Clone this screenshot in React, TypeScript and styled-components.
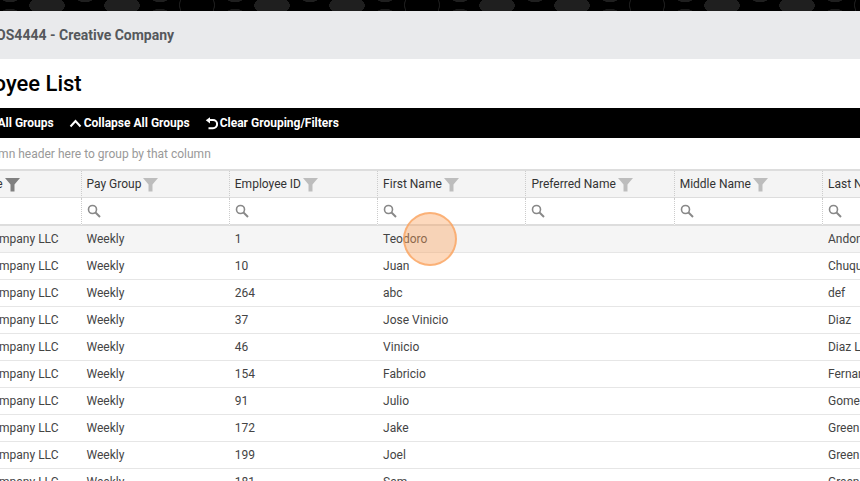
import { Fragment } from 'react';
import styled, { createGlobalStyle } from 'styled-components';

const GlobalStyle = createGlobalStyle`
  html, body {
    margin: 0;
    padding: 0;
    background: #fff;
    overflow: hidden;
  }
`;

const Viewport = styled.div`
  position: relative;
  width: 860px;
  height: 481px;
  overflow: hidden;
  font-family: Roboto, "Liberation Sans", sans-serif;
`;

const Pattern = styled.div`
  height: 11px;
  background-color: #000;
  background-image:
    radial-gradient(circle at 197px 5px, transparent 16.5px, #1c1c1c 17px, #1c1c1c 17.6px, transparent 18px),
    radial-gradient(ellipse 18px 9px at 47px 5.5px, #1f1f1f 98%, transparent 100%),
    radial-gradient(ellipse 18px 9px at 122px 5.5px, #1f1f1f 98%, transparent 100%),
    radial-gradient(circle at 85px -12px, #1f1f1f 14px, transparent 14.5px),
    radial-gradient(circle at 160px -12px, #1f1f1f 14px, transparent 14.5px),
    radial-gradient(circle at 10px -12px, #1f1f1f 14px, transparent 14.5px),
    radial-gradient(circle at 10px 23px, #1a1a1a 14px, transparent 14.5px),
    radial-gradient(circle at 160px 23px, #1a1a1a 14px, transparent 14.5px);
  background-size: 225px 11px;
`;

const CompanyBar = styled.div`
  display: flex;
  align-items: center;
  height: 48px;
  background: #e9eaec;
  white-space: nowrap;
  overflow: hidden;
`;

const CompanyName = styled.span`
  margin-left: -13px;
  font-size: 14px;
  font-weight: 700;
  color: #55585c;
`;

const TitleBar = styled.div`
  display: flex;
  align-items: center;
  height: 49px;
  white-space: nowrap;
  overflow: hidden;
`;

const Title = styled.h1`
  margin: 0 0 0 -56px;
  font-size: 22px;
  font-weight: 500;
  color: #000;
`;

const Toolbar = styled.div`
  display: flex;
  align-items: center;
  gap: 15px;
  height: 30px;
  background: #000;
  white-space: nowrap;
  overflow: hidden;
`;

const ToolbarButton = styled.span<{ $offset?: number }>`
  display: inline-flex;
  align-items: center;
  gap: 2px;
  margin-left: ${(p) => p.$offset ?? 0}px;
  font-size: 12px;
  font-weight: 700;
  color: #fff;
`;

const GroupHint = styled.div`
  display: flex;
  align-items: center;
  height: 31px;
  font-size: 12px;
  color: #999;
  white-space: nowrap;
  overflow: hidden;
`;

const HintText = styled.span`
  margin-left: -62px;
`;

const Grid = styled.div`
  display: grid;
  grid-template-columns: 81.5px repeat(5, 148.3px) 148px;
  border-top: 2px solid #ddd;
  width: max-content;
`;

const HeaderCell = styled.div<{ $first?: boolean }>`
  display: flex;
  align-items: center;
  justify-content: ${(p) => (p.$first ? 'flex-end' : 'flex-start')};
  gap: 2px;
  box-sizing: border-box;
  height: 27px;
  padding: ${(p) => (p.$first ? '0 61px 0 0' : '0 5px')};
  background: #f4f4f4;
  border-bottom: 1px solid #ddd;
  border-right: 1px dotted #ccc;
  font-size: 12px;
  color: #333;
  white-space: nowrap;
  overflow: hidden;
`;

const FilterCell = styled.div`
  display: flex;
  align-items: center;
  box-sizing: border-box;
  height: 28px;
  padding: 0 5px;
  background: #fff;
  border-bottom: 2px solid #ddd;
  border-right: 1px dotted #ccc;
`;

const BodyCell = styled.div<{ $even: boolean; $first?: boolean }>`
  display: flex;
  align-items: center;
  justify-content: ${(p) => (p.$first ? 'flex-end' : 'flex-start')};
  box-sizing: border-box;
  height: 27px;
  padding: ${(p) => (p.$first ? '0 23px 0 0' : '0 5px')};
  background: ${(p) => (p.$even ? '#f5f5f5' : '#fff')};
  border-bottom: 1px solid #e6e6e6;
  font-size: 12px;
  color: #444;
  white-space: nowrap;
  overflow: hidden;
`;

const Spotlight = styled.div`
  position: absolute;
  left: 403px;
  top: 212px;
  box-sizing: border-box;
  width: 54px;
  height: 54px;
  border-radius: 50%;
  background: rgba(250, 160, 90, 0.4);
  border: 2px solid rgba(250, 160, 90, 0.7);
`;

const FunnelIcon = ({ color }: { color: string }) => (
  <svg width="15" height="15" viewBox="0 0 15 15" style={{ flexShrink: 0 }}>
    <path d="M0 1h15L9.5 7.5V14.5H5.5V7.5z" fill={color} />
  </svg>
);

const SearchIcon = () => (
  <svg width="14" height="14" viewBox="0 0 14 14" fill="none" stroke="#888" strokeWidth="1.6">
    <circle cx="5.5" cy="5.5" r="4" />
    <path d="M8.5 8.5L13 13" strokeWidth="2" />
  </svg>
);

const ChevronIcon = () => (
  <svg width="13" height="9" viewBox="0 0 13 9" fill="none" stroke="#fff" strokeWidth="2">
    <path d="M1.5 7.5L6.5 2l5 5.5" />
  </svg>
);

const ResetIcon = () => (
  <svg width="13" height="13" viewBox="0 0 13 13" fill="none" stroke="#fff" strokeWidth="2">
    <path d="M3.5 3H8a4 4 0 0 1 0 8.2H3.5" />
    <path d="M0.8 3.2L5 0.2V6.6z" fill="#fff" stroke="none" />
  </svg>
);

const columns = ['Company Name', 'Pay Group', 'Employee ID', 'First Name', 'Preferred Name', 'Middle Name', 'Last Name'];

const employees = [
  ['1', 'Teodoro', 'Andon'],
  ['10', 'Juan', 'Chuqu'],
  ['264', 'abc', 'def'],
  ['37', 'Jose Vinicio', 'Diaz'],
  ['46', 'Vinicio', 'Diaz L'],
  ['154', 'Fabricio', 'Fernan'],
  ['91', 'Julio', 'Gomez'],
  ['172', 'Jake', 'Green'],
  ['199', 'Joel', 'Green'],
  ['181', 'Sam', 'Green'],
];

export default function App() {
  return (
    <Viewport>
      <GlobalStyle />
      <Pattern />
      <CompanyBar>
        <CompanyName>DOS4444 - Creative Company</CompanyName>
      </CompanyBar>
      <TitleBar>
        <Title>Employee List</Title>
      </TitleBar>
      <Toolbar>
        <ToolbarButton $offset={-60}>
          <ChevronIcon />
          Expand All Groups
        </ToolbarButton>
        <ToolbarButton>
          <ChevronIcon />
          Collapse All Groups
        </ToolbarButton>
        <ToolbarButton>
          <ResetIcon />
          Clear Grouping/Filters
        </ToolbarButton>
      </Toolbar>
      <GroupHint>
        <HintText>Drag a column header here to group by that column</HintText>
      </GroupHint>
      <Grid>
        {columns.map((name, i) => (
          <HeaderCell key={name} $first={i === 0}>
            {name}
            <FunnelIcon color={i === 0 ? '#808080' : '#bdbdbd'} />
          </HeaderCell>
        ))}
        {columns.map((name) => (
          <FilterCell key={name}>
            {name !== 'Company Name' && <SearchIcon />}
          </FilterCell>
        ))}
        {employees.map(([id, first, last], row) => (
          <Fragment key={id}>
            <BodyCell $even={row === 0} $first>Creative Company LLC</BodyCell>
            <BodyCell $even={row === 0}>Weekly</BodyCell>
            <BodyCell $even={row === 0}>{id}</BodyCell>
            <BodyCell $even={row === 0}>{first}</BodyCell>
            <BodyCell $even={row === 0} />
            <BodyCell $even={row === 0} />
            <BodyCell $even={row === 0}>{last}</BodyCell>
          </Fragment>
        ))}
      </Grid>
      <Spotlight />
    </Viewport>
  );
}
